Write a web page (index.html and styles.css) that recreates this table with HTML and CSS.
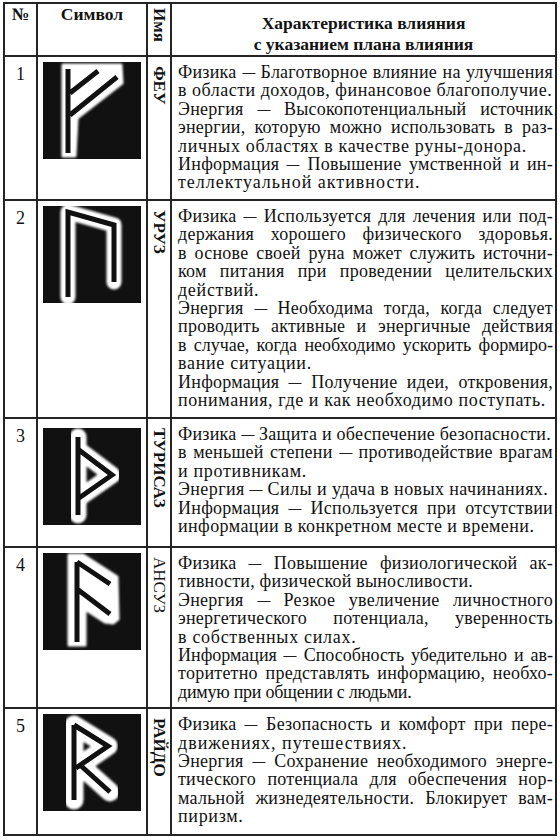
FILE: index.html
```html
<!DOCTYPE html>
<html lang="ru">
<head>
<meta charset="utf-8">
<title>Руны</title>
<link rel="stylesheet" href="styles.css">
</head>
<body>
<svg class="defs" width="0" height="0" aria-hidden="true">
  <defs>
    <filter id="soft" x="-20%" y="-20%" width="140%" height="140%">
      <feGaussianBlur stdDeviation="0.9"/>
    </filter>
  </defs>
</svg>
<table class="runes">
  <colgroup>
    <col class="c-num"><col class="c-sym"><col class="c-name"><col class="c-desc">
  </colgroup>
  <thead>
    <tr class="head">
      <th class="h-num">№</th>
      <th class="h-sym">Символ</th>
      <th class="h-name"><span class="vert">Имя</span></th>
      <th class="h-desc">Характеристика влияния<br>с указанием плана влияния</th>
    </tr>
  </thead>
  <tbody>
    <tr class="r1">
      <td class="num">1</td>
      <td class="sym">
        <svg class="rune" viewBox="0 0 98 97">
          <rect width="98" height="97" fill="#111"/>
          <g class="glow" filter="url(#soft)">
            <path class="fill" d="M20 3 L78 3 L79 21 L34 56 L32 94 L20 94 Z"/>
          </g>
          <path class="core" d="M25 7 V91 M27 31 L55 9 M27 53 L74 15"/>
        </svg>
      </td>
      <td class="name"><span class="vert">ФЕУ</span></td>
      <td class="desc">
        <span class="l j">Физика <span class="dash">—</span> Благотворное влияние на улучшения</span>
        <span class="l ls-d">в области доходов, финансовое благополучие.</span>
        <span class="l j">Энергия <span class="dash">—</span> Высокопотенциальный источник</span>
        <span class="l j">энергии, которую можно использовать в раз-</span>
        <span class="l">личных областях в качестве руны-донора.</span>
        <span class="l j">Информация <span class="dash">—</span> Повышение умственной и ин-</span>
        <span class="l wide">теллектуальной активности.</span>
      </td>
    </tr>
    <tr class="r2">
      <td class="num">2</td>
      <td class="sym">
        <svg class="rune" viewBox="0 0 98 97">
          <rect width="98" height="97" fill="#111"/>
          <g class="glow" filter="url(#soft)">
            <path class="band" stroke-width="15" d="M25 91 V6 L71 19 V76"/>
          </g>
          <path class="core" d="M25 91 V6 L71 19 V76"/>
        </svg>
      </td>
      <td class="name"><span class="vert">УРУЗ</span></td>
      <td class="desc">
        <span class="l j">Физика <span class="dash">—</span> Используется для лечения или под-</span>
        <span class="l j">держания хорошего физического здоровья.</span>
        <span class="l j">в основе своей руна может служить источни-</span>
        <span class="l j">ком питания при проведении целительских</span>
        <span class="l">действий.</span>
        <span class="l j">Энергия <span class="dash">—</span> Необходима тогда, когда следует</span>
        <span class="l j">проводить активные и энергичные действия</span>
        <span class="l j tight">в случае, когда необходимо ускорить формиро-</span>
        <span class="l">вание ситуации.</span>
        <span class="l j">Информация <span class="dash">—</span> Получение идеи, откровения,</span>
        <span class="l ls-e">понимания, где и как необходимо поступать.</span>
      </td>
    </tr>
    <tr class="r3">
      <td class="num">3</td>
      <td class="sym sym-low">
        <svg class="rune" viewBox="0 0 98 97">
          <rect width="98" height="97" fill="#111"/>
          <g class="glow" filter="url(#soft)">
            <path class="band" stroke-width="17" d="M35 9 V87 M36 22 L69 47 L36 70"/>
          </g>
          <path class="core" d="M35 9 V87 M36 22 L69 47 L36 70"/>
        </svg>
      </td>
      <td class="name"><span class="vert">ТУРИСАЗ</span></td>
      <td class="desc">
        <span class="l ls-a">Физика <span class="dash">—</span> Защита и обеспечение безопасности.</span>
        <span class="l j">в меньшей степени <span class="dash">—</span> противодействие врагам</span>
        <span class="l">и противникам.</span>
        <span class="l ls-b">Энергия <span class="dash">—</span> Силы и удача в новых начинаниях.</span>
        <span class="l j">Информация <span class="dash">—</span> Используется при отсутствии</span>
        <span class="l ls-b">информации в конкретном месте и времени.</span>
      </td>
    </tr>
    <tr class="r4">
      <td class="num">4</td>
      <td class="sym">
        <svg class="rune" viewBox="0 0 98 97">
          <rect width="98" height="97" fill="#111"/>
          <g class="glow" filter="url(#soft)">
            <path class="fill" d="M26 2 L40 2 L74 24 L75 66 L70 70 L62 69 L42 56 L42 92 L26 92 Z"/>
          </g>
          <path class="core" d="M34 9 V89 M34 9 L67 31 M34 36 L67 61"/>
        </svg>
      </td>
      <td class="name"><span class="vert thin">АНСУЗ</span></td>
      <td class="desc">
        <span class="l j">Физика <span class="dash">—</span> Повышение физиологической ак-</span>
        <span class="l ls-f">тивности, физической выносливости.</span>
        <span class="l j">Энергия <span class="dash">—</span> Резкое увеличение личностного</span>
        <span class="l j">энергетического потенциала, уверенность</span>
        <span class="l">в собственных силах.</span>
        <span class="l j tight">Информация <span class="dash">—</span> Способность убедительно и ав-</span>
        <span class="l j">торитетно представлять информацию, необхо-</span>
        <span class="l ls-c">димую при общении с людьми.</span>
      </td>
    </tr>
    <tr class="r5">
      <td class="num">5</td>
      <td class="sym">
        <svg class="rune" viewBox="0 0 98 97">
          <rect width="98" height="97" fill="#111"/>
          <g class="glow" filter="url(#soft)">
            <path class="band" stroke-width="19" d="M31 11 V86 M31 11 L65 32 L33 54 M37 51 L67 78"/>
          </g>
          <path class="core" d="M31 11 V86 M31 11 L65 32 L33 54 M37 51 L67 78"/>
        </svg>
      </td>
      <td class="name"><span class="vert">РАЙДО</span></td>
      <td class="desc">
        <span class="l j">Физика <span class="dash">—</span> Безопасность и комфорт при пере-</span>
        <span class="l wide">движениях, путешествиях.</span>
        <span class="l j">Энергия <span class="dash">—</span> Сохранение необходимого энерге-</span>
        <span class="l j">тического потенциала для обеспечения нор-</span>
        <span class="l j">мальной жизнедеятельности. Блокирует вам-</span>
        <span class="l">пиризм.</span>
      </td>
    </tr>
  </tbody>
</table>
</body>
</html>
```

FILE: styles.css
```css
html, body {
  margin: 0;
  padding: 0;
  background: #ffffff;
}

body {
  font-family: "Liberation Serif", "Times New Roman", serif;
  color: #121212;
}

.defs {
  position: absolute;
  width: 0;
  height: 0;
}

.runes {
  border-collapse: collapse;
  table-layout: fixed;
  width: 552px;
  margin: 2px 0 0 3px;
}

.c-num { width: 33px; }
.c-sym { width: 110px; }
.c-name { width: 24px; }
.c-desc { width: 385px; }

.runes th,
.runes td {
  border: 2px solid #242424;
  vertical-align: top;
  padding: 0;
}

.head { height: 52px; }
.r1 { height: 144px; }
.r2 { height: 218px; }
.r3 { height: 129px; }
.r4 { height: 161px; }
.r5 { height: 127px; }

.runes th {
  font-weight: bold;
  font-size: 17.5px;
  line-height: 20px;
  text-align: center;
}

.runes .h-num,
.runes .h-sym {
  padding-top: 0;
}

.runes .h-desc {
  padding-top: 9px;
  line-height: 21px;
}

.runes .h-name {
  padding-top: 4px;
}

.vert {
  display: inline-block;
  writing-mode: vertical-rl;
  line-height: 22px;
  font-weight: bold;
  font-size: 17px;
}

.vert.thin {
  font-weight: normal;
}

.runes .name {
  text-align: center;
  padding-top: 9px;
}

.runes .num {
  text-align: center;
  font-size: 18px;
  line-height: 18.4px;
  padding-top: 8px;
}

.runes .sym {
  padding-top: 5px;
}

.runes .sym-low {
  padding-top: 9px;
}

.rune {
  display: block;
  width: 98px;
  height: 97px;
  margin: 0 auto;
}

.glow .fill {
  fill: #ffffff;
  stroke: #ffffff;
  stroke-width: 3;
  stroke-linejoin: round;
}

.glow .band {
  fill: none;
  stroke: #ffffff;
  stroke-linejoin: round;
  stroke-linecap: round;
}

.core {
  fill: none;
  stroke: #111111;
  stroke-width: 5;
  stroke-linejoin: miter;
  stroke-linecap: butt;
}

.runes .desc {
  font-size: 18px;
  line-height: 18.4px;
  padding: 6px 2px 6px 6px;
}

.l {
  display: block;
  text-align: left;
  white-space: nowrap;
  letter-spacing: 0.7px;
}

.l.j {
  white-space: normal;
  text-align: justify;
  text-align-last: justify;
  letter-spacing: 0.25px;
}

.l.j.tight {
  letter-spacing: 0;
}

.l.wide { letter-spacing: 1px; }
.l.ls-a { letter-spacing: 0.25px; }
.l.ls-b { letter-spacing: 0.42px; }
.l.ls-c { letter-spacing: -0.25px; }
.l.ls-d { letter-spacing: 0.5px; }
.l.ls-e { letter-spacing: 0.6px; }
.l.ls-f { letter-spacing: 0.2px; }

.dash {
  display: inline-block;
  transform: scaleX(0.72);
  margin: 0 -2.5px;
  letter-spacing: 0;
}
```
